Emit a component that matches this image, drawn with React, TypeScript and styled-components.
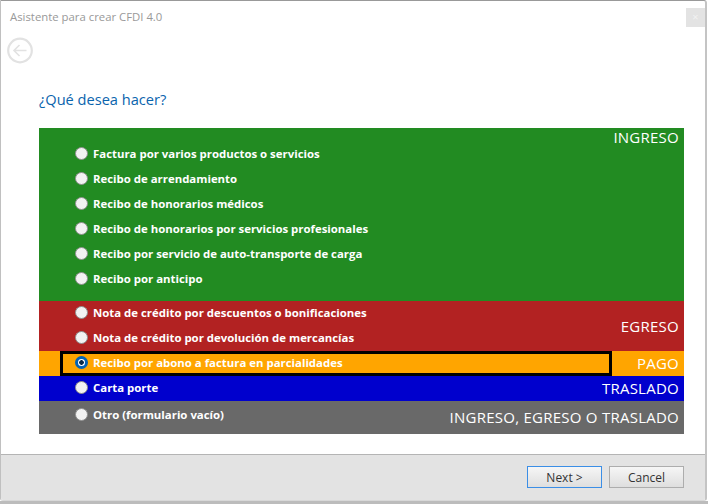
import React from "react";
import styled, { createGlobalStyle } from "styled-components";

const GlobalStyle = createGlobalStyle`
  html, body {
    margin: 0;
    padding: 0;
    background: #fff;
  }
  body {
    font-family: "Open Sans", "Liberation Sans", sans-serif;
    width: 708px;
    height: 504px;
    overflow: hidden;
  }
`;

const Frame = styled.div`
  box-sizing: border-box;
  width: 707px;
  height: 501px;
  display: flex;
  flex-direction: column;
  background: #fff;
  border-top: 1px solid #999;
  border-left: 1px solid #c0c0c0;
  border-right: 2px solid #c4c4c4;
  border-bottom: 1px solid #d8d8d8;
  border-top-right-radius: 3px;
  border-bottom-right-radius: 3px;
  border-bottom-left-radius: 3px;
  overflow: hidden;
`;

const BottomEdge = styled.div`
  height: 3px;
  background: #bcbcbc;
`;

const TitleBar = styled.div`
  display: flex;
  justify-content: space-between;
  padding: 7px 0 0 9px;
  height: 25px;
`;

const Title = styled.span`
  font-size: 11.35px;
  line-height: 17px;
  color: #999;
`;

const CloseButton = styled.div`
  width: 19px;
  height: 19px;
  background: #e3e3e3;
  color: #f2f2f2;
  font-size: 11px;
  line-height: 18px;
  text-align: center;
`;

const BackRow = styled.div`
  padding: 4px 0 0 5px;
  height: 30px;
`;

const BackIcon = styled.svg`
  display: block;
`;

const Heading = styled.h1`
  margin: 0;
  padding: 22px 0 0 38px;
  font-size: 14.6px;
  font-weight: 400;
  line-height: 20px;
  color: #0a64ad;
`;

const Bands = styled.div`
  margin: 19px 0 0 38px;
  width: 645px;
  display: flex;
  flex-direction: column;
`;

const Band = styled.div<{ $bg: string; $height: number; $pad: number }>`
  display: grid;
  box-sizing: border-box;
  height: ${(p) => p.$height}px;
  padding-top: ${(p) => p.$pad}px;
  background: ${(p) => p.$bg};
`;

const Options = styled.div`
  grid-area: 1 / 1;
  display: flex;
  flex-direction: column;
`;

const Option = styled.label<{ $selected?: boolean }>`
  box-sizing: border-box;
  display: flex;
  align-items: center;
  gap: 5px;
  height: 25px;
  width: 552px;
  margin-left: 21px;
  padding: 0 0 2px 12px;
  color: #fff;
  font-size: 11.4px;
  font-weight: 700;
  border: 3px solid ${(p) => (p.$selected ? "#000" : "transparent")};
`;

const Radio = styled.span<{ $checked?: boolean }>`
  box-sizing: border-box;
  width: 13px;
  height: 13px;
  border-radius: 50%;
  flex: none;
  background: #f2f2f2;
  border: 1px solid #8f8f8f;
  ${(p) =>
    p.$checked &&
    "border: 3px solid #0563b5; background: radial-gradient(circle, #0a2a4a 0 2px, #fff 2.6px);"}
`;

const BandLabel = styled.div<{ $align: string; $shift: number }>`
  grid-area: 1 / 1;
  justify-self: end;
  align-self: ${(p) => p.$align};
  margin-top: ${(p) => p.$shift}px;
  padding-right: 5px;
  color: #fff;
  font-size: 15px;
  letter-spacing: 0.25px;
  line-height: 18px;
  white-space: nowrap;
`;

const Footer = styled.div`
  margin-top: 20px;
  flex: 1;
  display: flex;
  justify-content: flex-end;
  gap: 7px;
  padding: 11px 21px 0 0;
  background: #e3e3e3;
  border-top: 1px solid #b4b4b4;
`;

const Button = styled.button<{ $primary?: boolean }>`
  box-sizing: border-box;
  width: 75px;
  height: 22px;
  padding: 0;
  font-family: "Open Sans", sans-serif;
  font-size: 12px;
  color: #333;
  background: linear-gradient(#f6f6f6, #dedede);
  border: 1px solid ${(p) => (p.$primary ? "#3b8ee6" : "#adadad")};
`;

const bands = [
  {
    bg: "#228b22",
    height: 173,
    pad: 14,
    label: "INGRESO",
    align: "start",
    shift: -14,
    options: [
      "Factura por varios productos o servicios",
      "Recibo de arrendamiento",
      "Recibo de honorarios médicos",
      "Recibo de honorarios por servicios profesionales",
      "Recibo por servicio de auto-transporte de carga",
      "Recibo por anticipo",
    ],
  },
  {
    bg: "#b22222",
    height: 50,
    pad: 0,
    label: "EGRESO",
    align: "center",
    shift: 0,
    options: [
      "Nota de crédito por descuentos o bonificaciones",
      "Nota de crédito por devolución de mercancías",
    ],
  },
  {
    bg: "#ffa500",
    height: 25,
    pad: 0,
    label: "PAGO",
    align: "center",
    shift: -2,
    options: ["Recibo por abono a factura en parcialidades"],
    selected: true,
  },
  {
    bg: "#0000cd",
    height: 25,
    pad: 0,
    label: "TRASLADO",
    align: "center",
    shift: -2,
    options: ["Carta porte"],
  },
  {
    bg: "#696969",
    height: 33,
    pad: 2,
    label: "INGRESO, EGRESO O TRASLADO",
    align: "center",
    shift: -4,
    options: ["Otro (formulario vacío)"],
  },
];

export default function App() {
  return (
    <>
      <GlobalStyle />
      <Frame>
        <TitleBar>
          <Title>Asistente para crear CFDI 4.0</Title>
          <CloseButton>×</CloseButton>
        </TitleBar>
        <BackRow>
          <BackIcon width="27" height="27" viewBox="0 0 27 27" fill="none" stroke="#e2e2e2">
            <circle cx="14" cy="13.5" r="11.8" strokeWidth="2.2" />
            <path d="M20.5 13.5H8M13.5 8L8 13.5l5.5 5.5" strokeWidth="1.6" />
          </BackIcon>
        </BackRow>
        <Heading>¿Qué desea hacer?</Heading>
        <Bands>
          {bands.map((band) => (
            <Band key={band.label} $bg={band.bg} $height={band.height} $pad={band.pad}>
              <Options>
                {band.options.map((text) => (
                  <Option key={text} $selected={band.selected}>
                    <Radio $checked={band.selected} />
                    {text}
                  </Option>
                ))}
              </Options>
              <BandLabel $align={band.align} $shift={band.shift}>
                {band.label}
              </BandLabel>
            </Band>
          ))}
        </Bands>
        <Footer>
          <Button $primary>Next &gt;</Button>
          <Button>Cancel</Button>
        </Footer>
      </Frame>
      <BottomEdge />
    </>
  );
}
